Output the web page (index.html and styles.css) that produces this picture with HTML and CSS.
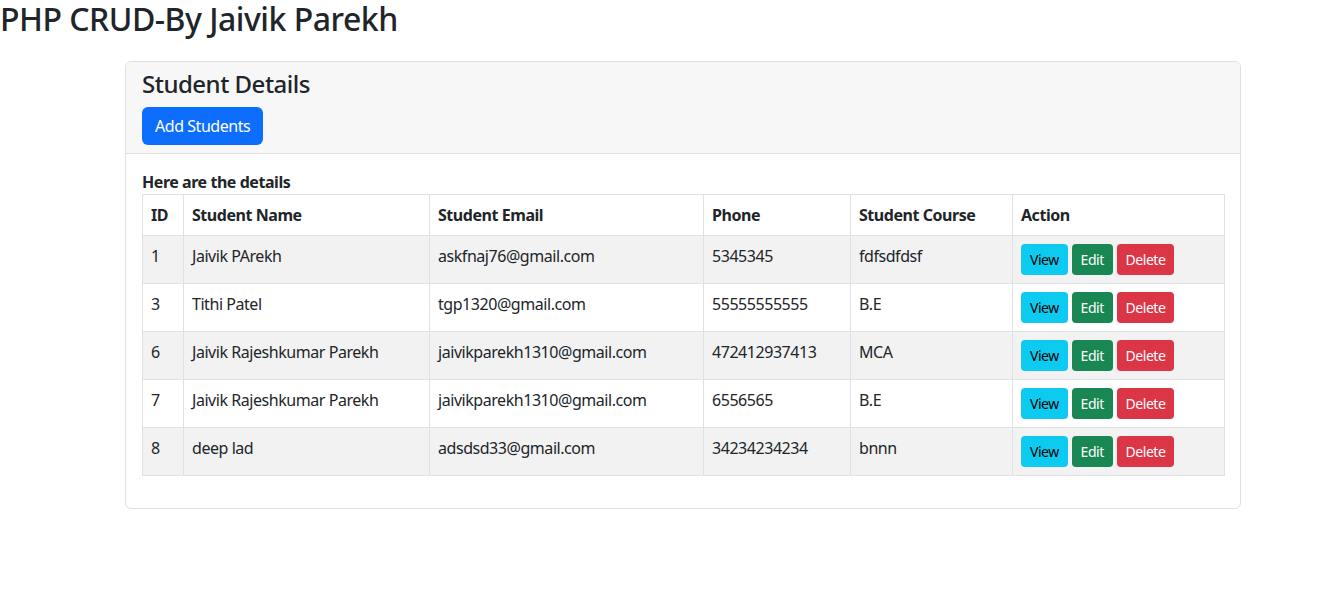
FILE: index.html
```html
<!DOCTYPE html>
<html lang="en">
<head>
<meta charset="utf-8">
<title>PHP CRUD</title>
<link rel="stylesheet" href="styles.css">
</head>
<body>
<h2 class="page-title">PHP CRUD-By Jaivik Parekh</h2>
<div class="container">
  <div class="card">
    <div class="card-header">
      <h4 class="card-title">Student Details</h4>
      <a class="btn btn-primary" href="#">Add Students</a>
    </div>
    <div class="card-body">
      <div class="caption">Here are the details</div>
      <table class="table">
        <colgroup>
          <col class="c-id"><col class="c-name"><col class="c-email"><col class="c-phone"><col class="c-course"><col class="c-action">
        </colgroup>
        <thead>
          <tr><th>ID</th><th>Student Name</th><th>Student Email</th><th>Phone</th><th>Student Course</th><th>Action</th></tr>
        </thead>
        <tbody>
          <tr class="odd"><td>1</td><td>Jaivik PArekh</td><td>askfnaj76@gmail.com</td><td>5345345</td><td>fdfsdfdsf</td>
            <td><a class="btn-sm btn-info" href="#">View</a> <a class="btn-sm btn-success" href="#">Edit</a> <a class="btn-sm btn-danger" href="#">Delete</a></td></tr>
          <tr><td>3</td><td>Tithi Patel</td><td>tgp1320@gmail.com</td><td>55555555555</td><td>B.E</td>
            <td><a class="btn-sm btn-info" href="#">View</a> <a class="btn-sm btn-success" href="#">Edit</a> <a class="btn-sm btn-danger" href="#">Delete</a></td></tr>
          <tr class="odd"><td>6</td><td>Jaivik Rajeshkumar Parekh</td><td>jaivikparekh1310@gmail.com</td><td>472412937413</td><td>MCA</td>
            <td><a class="btn-sm btn-info" href="#">View</a> <a class="btn-sm btn-success" href="#">Edit</a> <a class="btn-sm btn-danger" href="#">Delete</a></td></tr>
          <tr><td>7</td><td>Jaivik Rajeshkumar Parekh</td><td>jaivikparekh1310@gmail.com</td><td>6556565</td><td>B.E</td>
            <td><a class="btn-sm btn-info" href="#">View</a> <a class="btn-sm btn-success" href="#">Edit</a> <a class="btn-sm btn-danger" href="#">Delete</a></td></tr>
          <tr class="odd"><td>8</td><td>deep lad</td><td>adsdsd33@gmail.com</td><td>34234234234</td><td>bnnn</td>
            <td><a class="btn-sm btn-info" href="#">View</a> <a class="btn-sm btn-success" href="#">Edit</a> <a class="btn-sm btn-danger" href="#">Delete</a></td></tr>
        </tbody>
      </table>
    </div>
  </div>
</div>
</body>
</html>
```

FILE: styles.css
```css
* { box-sizing: border-box; }
body {
  margin: 0;
  font-family: "Noto Sans", "Open Sans", sans-serif;
  font-size: 16px;
  line-height: 1.5;
  color: #212529;
  background: #fff;
  letter-spacing: -0.45px;
}
.page-title {
  margin: 0 0 8px 0;
  font-size: 32px;
  font-weight: 500;
  line-height: 1.2;
  letter-spacing: -0.5px;
}
.container {
  width: 1116px;
  margin: 23px 0 0 125px;
}
.card {
  border: 1px solid #dfdfdf;
  border-radius: 6px;
  background: #fff;
}
.card-header {
  background: #f7f7f7;
  padding: 8px 16px;
  border-bottom: 1px solid #dfdfdf;
  border-radius: 5px 5px 0 0;
}
.card-title {
  margin: 0 0 8px 0;
  font-size: 24px;
  font-weight: 500;
  line-height: 1.2;
  letter-spacing: -0.5px;
}
.btn {
  display: inline-block;
  padding: 6px 12px;
  font-size: 16px;
  line-height: 24px;
  border: 1px solid transparent;
  border-radius: 6px;
  text-decoration: none;
}
.btn-primary { background: #0d6efd; color: #fff; }
.card-body { padding: 16px; }
.caption { font-weight: 700; line-height: 24px; }
.table {
  width: 100%;
  border-collapse: collapse;
  table-layout: fixed;
  margin-bottom: 16px;
  vertical-align: top;
}
.c-id { width: 41px; }
.c-name { width: 246px; }
.c-email { width: 274px; }
.c-phone { width: 147px; }
.c-course { width: 162px; }
.c-action { width: 212px; }
.table th, .table td {
  border: 1px solid #dee2e6;
  padding: 8px;
  text-align: left;
  vertical-align: top;
  white-space: nowrap;
}
.table th { font-weight: 700; }
.table tr.odd td { background: #f2f2f2; }
.btn-sm {
  display: inline-block;
  padding: 4px 8px;
  font-size: 14px;
  line-height: 21px;
  border: 1px solid transparent;
  border-radius: 4px;
  text-decoration: none;
}
.btn-info { background: #0dcaf0; color: #000; }
.btn-success { background: #198754; color: #fff; }
.btn-danger { background: #dc3545; color: #fff; }
```
